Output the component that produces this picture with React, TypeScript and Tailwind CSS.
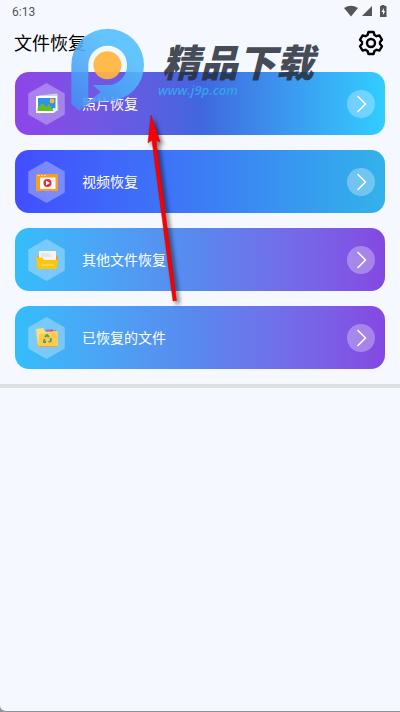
import React from "react";

type Entry = {
  label: string;
  gradient: string;
  icon: React.ReactNode;
};

function PhotoIcon() {
  return (
    <svg viewBox="0 0 26 22" className="relative h-[22px] w-[26px]" aria-hidden="true">
      <path d="M5 2L24 1L24 18L4 20Z" fill="#c8d8df" transform="rotate(-3 13 11)" />
      <path d="M2 3H23V17L20 20H2Z" fill="#fff" />
      <path d="M4 5H21.500V16H4Z" fill="#2f91ea" />
      <circle cx="18" cy="8" r="2.400" fill="#fdb32c" />
      <path d="M3.500 18V15L8.500 10L12 14L15 11L19 17V18Z" fill="#65bd25" />
      <path d="M19 20L23 15H19Z" fill="#d8e4ec" />
    </svg>
  );
}

function VideoIcon() {
  return (
    <svg viewBox="0 0 26 22" className="relative h-[22px] w-[26px]" aria-hidden="true">
      <path d="M2 3H24V20H2Z" fill="#fb9d25" />
      <path d="M4 4.500H5.500M7 4.500H8.500M10 4.500H11.500" stroke="#fff0cb" />
      <path d="M6 6.500H21.500V18H6Z" fill="#fff8f6" />
      <circle cx="13.500" cy="12" r="4" fill="#e22f40" />
      <path d="M12 9.800L16 12L12 14.200Z" fill="#fff" />
    </svg>
  );
}

function FolderIcon() {
  return (
    <svg viewBox="0 0 26 22" className="relative h-[22px] w-[26px]" aria-hidden="true">
      <path d="M3 7L6 6V18H22V6L24 8L22 20H3Z" fill="#f39e17" />
      <path d="M5 2H22V14H5Z" fill="#f6f5f2" />
      <path d="M7 5H16M7 7H18" stroke="#d8d8d8" />
      <path d="M2 8.500H8L10.500 11H24L22.500 20H3.500Z" fill="#fec50d" />
      <path d="M7 16H20" stroke="#ffe473" strokeWidth="1.200" />
    </svg>
  );
}

function RecycledIcon() {
  return (
    <svg viewBox="0 0 26 22" className="relative h-[22px] w-[26px]" aria-hidden="true">
      <path d="M10 3L15 2L17 8H10Z" fill="#7590ee" />
      <path d="M15 3L19 2L20 8H15Z" fill="#db527c" />
      <path d="M19 4L22 3L23 8H19Z" fill="#a55ae3" />
      <path d="M3 18L24 18L23 20H4Z" fill="#f2a334" />
      <path d="M2 2L9 1L12 5L23 4L24 19H4Z" fill="#ffe17b" />
      <path d="M5 7L24 5V19H4Z" fill="#ffca50" />
      <g fill="none" stroke="#42a65b" strokeWidth="1.800">
        <path d="M11 10L13 8L15 10" />
        <path d="M16.500 11L17 14L14.500 15" />
        <path d="M12 15H10L10.500 12" />
      </g>
    </svg>
  );
}

const entries: Entry[] = [
  {
    label: "照片恢复",
    gradient: "from-[#8e44e8] via-[#4066df] to-[#30ceff]",
    icon: <PhotoIcon />,
  },
  {
    label: "视频恢复",
    gradient: "from-[#434dff] via-[#3d7bf5] to-[#33b2ea]",
    icon: <VideoIcon />,
  },
  {
    label: "其他文件恢复",
    gradient: "from-[#34bdfb] via-[#5987ee] to-[#8448e2]",
    icon: <FolderIcon />,
  },
  {
    label: "已恢复的文件",
    gradient: "from-[#34bdfb] via-[#5987ee] to-[#8448e2]",
    icon: <RecycledIcon />,
  },
];

function StatusBar() {
  return (
    <div className="flex h-[22px] items-center justify-between pr-2.5 pl-3 font-[Roboto,sans-serif] text-xs text-[#555]">
      <span className="pt-0.5">6:13</span>
      <div className="flex items-center gap-1">
        <svg viewBox="0 0 14 12" className="h-3 w-3.5" fill="#555" aria-hidden="true">
          <path d="M0 3Q7 -1.500 14 3L7 11.500Z" />
        </svg>
        <svg viewBox="0 0 10 10" className="h-2.5 w-2.5" fill="#555" aria-hidden="true">
          <path d="M10 0V10H0Z" />
        </svg>
        <svg viewBox="0 0 14 12" className="h-3 w-3.5" aria-hidden="true">
          <path d="M5.500 0H8.500V1H10.500V12H4V1H5.500Z" fill="#555" />
          <path d="M7.800 3L5.500 7H7V10L9.200 6H7.800Z" fill="#fff" />
        </svg>
      </div>
    </div>
  );
}

function EntryButton({ label, gradient, icon }: Entry) {
  return (
    <button
      type="button"
      className={`flex h-[63px] w-full items-center rounded-[14px] bg-linear-to-r pr-2.5 pl-[13px] text-left text-white ${gradient}`}
    >
      <span className="relative flex h-[42px] w-[37px] items-center justify-center">
        <svg viewBox="0 0 37 42" className="absolute inset-0 h-full w-full" aria-hidden="true">
          <path
            d="M18.500 1L36 11V31L18.500 41L1 31V11Z"
            fill="#fff"
            stroke="#fff"
            strokeWidth="1.500"
            strokeLinejoin="round"
            opacity=".3"
          />
        </svg>
        {icon}
      </span>
      <span className="ml-[17px] flex-1 pb-0.5 text-sm">{label}</span>
      <span className="flex h-7 w-7 items-center justify-center rounded-full bg-white/30">
        <svg
          viewBox="0 0 10 18"
          className="ml-0.5 h-[18px] w-2.5"
          fill="none"
          stroke="#fff"
          strokeWidth="1.600"
          strokeLinecap="round"
          strokeLinejoin="round"
          aria-hidden="true"
        >
          <path d="M1 1.500L8.500 9L1 16.500" />
        </svg>
      </span>
    </button>
  );
}

function Brand() {
  return (
    <div className="pointer-events-none absolute top-6 left-[66px] flex">
      <svg viewBox="0 0 252 276" className="h-[92px] w-[84px]" aria-hidden="true">
        <defs>
          <linearGradient id="brandBlue" x1="0" y1="1" x2=".6" y2="0.200">
            <stop offset="0" stopColor="#458cf2" />
            <stop offset="1" stopColor="#50bdfd" />
          </linearGradient>
        </defs>
        <path
          d="M16 123A109 109 0 0 1 234 123A109 109 0 0 1 125 232Q85 232 66 240L40 260L16 240ZM67 123V234L104 204L80 183H125A58 58 0 0 0 183 123A58 58 0 0 0 67 123Z"
          fill="url(#brandBlue)"
          fillRule="evenodd"
          opacity=".88"
        />
        <circle cx="124" cy="124" r="42" fill="#ffb53e" opacity=".93" />
      </svg>
      <div className="flex flex-col pt-3.5 pl-2 italic">
        <span className="pl-1 text-[38px] leading-[46px] font-black text-[#262d39]/85">精品下载</span>
        <span className="font-['Open_Sans',sans-serif] text-[13px] leading-3 font-semibold text-[#35a9eb]/90">
          www.j9p.com
        </span>
      </div>
    </div>
  );
}

function PointerArrow() {
  return (
    <svg
      viewBox="0 0 50 200"
      className="pointer-events-none absolute top-[110px] left-[140px] h-[200px] w-[50px] drop-shadow-[3px_3px_2px_#0008]"
      aria-hidden="true"
    >
      <path d="M11 5L20 32L16 30L36.500 190.500L33 191L12 30L8 33Z" fill="#fb0000" stroke="#c80000" strokeWidth=".5" />
    </svg>
  );
}

export default function App() {
  return (
    <div className="bg-[#8c9298]">
      <div className="relative flex min-h-screen flex-col overflow-hidden rounded-bl-md border-b border-[#8c9298] bg-[#f5f9ff] font-['Noto_Sans_CJK_SC',sans-serif]">
        <StatusBar />
        <header className="flex h-[42px] items-center justify-between pr-4 pl-3.5">
          <h1 className="pb-0.5 text-lg font-normal text-black">文件恢复</h1>
          <button type="button" aria-label="设置">
            <svg
              viewBox="0 0 26 26"
              className="h-[26px] w-[26px]"
              fill="none"
              stroke="#000"
              strokeWidth="2.400"
              strokeLinejoin="round"
              aria-hidden="true"
            >
              <path d="M10.500 2H15.500L16.500 5L18.500 6.200L21.500 5.500L24 9.800L22 12V14L24 16.200L21.500 20.500L18.500 19.800L16.500 21L15.500 24H10.500L9.500 21L7.500 19.800L4.500 20.500L2 16.200L4 14V12L2 9.800L4.500 5.500L7.500 6.200L9.500 5Z" />
              <circle cx="13" cy="13" r="4" />
            </svg>
          </button>
        </header>
        <main>
          <nav className="flex flex-col gap-[15px] px-[15px] pt-2 pb-[15px]">
            {entries.map((entry) => (
              <EntryButton key={entry.label} {...entry} />
            ))}
          </nav>
          <hr className="h-1 border-0 bg-[#dedfe0]" />
        </main>
        <Brand />
        <PointerArrow />
      </div>
    </div>
  );
}
